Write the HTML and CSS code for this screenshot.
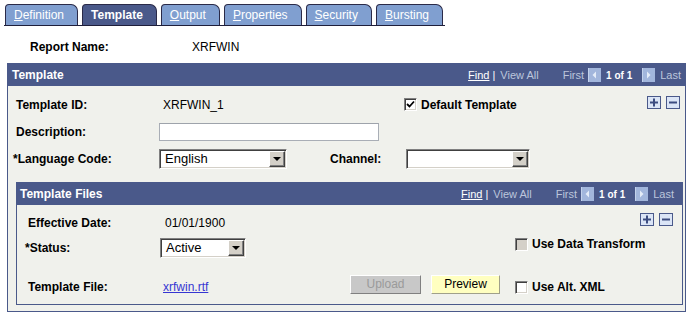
FILE: index.html
```html
<!DOCTYPE html>
<html lang="en">
<head>
    <meta charset="UTF-8">
    <title>Report Definition - Template</title>
    <link rel="stylesheet" href="styles.css">
</head>
<body>

    <!-- Page tabs -->
    <div class="tabs">
        <div class="tab"><u>D</u>efinition</div>
        <div class="tab active">Template</div>
        <div class="tab"><u>O</u>utput</div>
        <div class="tab"><u>P</u>roperties</div>
        <div class="tab"><u>S</u>ecurity</div>
        <div class="tab"><u>B</u>ursting</div>
    </div>

    <div class="report-row">
        <span class="label">Report Name:</span>
        <span>XRFWIN</span>
    </div>

    <!-- Template scroll area -->
    <div class="group outer">
        <div class="group-head">
            <span class="group-title">Template</span>
            <div class="nav">
                <a class="find">Find</a><span class="sep">|</span><span class="dim">View All</span>
                <span class="dim first">First</span>
                <svg class="nav-icon" width="13" height="14" viewBox="0 0 13 14"><rect width="13" height="14" fill="#a2b6dc"/><rect width="1" height="14" fill="#c3d2ec"/><path d="M8 3.5 L4.5 7 L8 10.5 Z" fill="#e4ecf8"/></svg>
                <b class="count">1 of 1</b>
                <svg class="nav-icon" width="13" height="14" viewBox="0 0 13 14"><rect width="13" height="14" fill="#a2b6dc"/><rect width="1" height="14" fill="#c3d2ec"/><path d="M5 3.5 L8.5 7 L5 10.5 Z" fill="#e4ecf8"/></svg>
                <span class="dim last">Last</span>
            </div>
        </div>
        <div class="group-body">
            <div class="row">
                <span class="label">Template ID:</span>
                <span class="value id-value">XRFWIN_1</span>
                <span class="check-wrap">
                    <span class="check"><svg width="9" height="9" viewBox="0 0 9 9"><path d="M1 4 L3.5 6.5 L8 1.5" stroke="#000" stroke-width="1.8" fill="none"/></svg></span>
                    <b>Default Template</b>
                </span>
                <span class="row-buttons top">
                    <span class="pm"><svg width="12" height="11" viewBox="0 0 12 11"><path d="M2 5.5 H10 M6 1.5 V9.5" stroke="#3c4c80" stroke-width="2"/></svg></span>
                    <span class="pm"><svg width="12" height="11" viewBox="0 0 12 11"><path d="M2 5.5 H10" stroke="#3c4c80" stroke-width="2"/></svg></span>
                </span>
            </div>
            <div class="row">
                <span class="label">Description:</span>
                <span class="text-input"></span>
            </div>
            <div class="row">
                <span class="label req">*Language Code:</span>
                <span class="select lang"><span class="select-text">English</span><span class="drop"></span></span>
                <span class="label channel-label">Channel:</span>
                <span class="select channel"><span class="select-text"></span><span class="drop"></span></span>
            </div>

            <!-- Template Files scroll area -->
            <div class="group inner">
                <div class="group-head">
                    <span class="group-title">Template Files</span>
                    <div class="nav">
                        <a class="find">Find</a><span class="sep">|</span><span class="dim">View All</span>
                        <span class="dim first">First</span>
                        <svg class="nav-icon" width="13" height="14" viewBox="0 0 13 14"><rect width="13" height="14" fill="#a2b6dc"/><rect width="1" height="14" fill="#c3d2ec"/><path d="M8 3.5 L4.5 7 L8 10.5 Z" fill="#e4ecf8"/></svg>
                        <b class="count">1 of 1</b>
                        <svg class="nav-icon" width="13" height="14" viewBox="0 0 13 14"><rect width="13" height="14" fill="#a2b6dc"/><rect width="1" height="14" fill="#c3d2ec"/><path d="M5 3.5 L8.5 7 L5 10.5 Z" fill="#e4ecf8"/></svg>
                        <span class="dim last">Last</span>
                    </div>
                </div>
                <div class="group-body">
                    <div class="row small-row">
                        <span class="label">Effective Date:</span>
                        <span class="value date-value">01/01/1900</span>
                        <span class="row-buttons">
                            <span class="pm"><svg width="12" height="11" viewBox="0 0 12 11"><path d="M2 5.5 H10 M6 1.5 V9.5" stroke="#3c4c80" stroke-width="2"/></svg></span>
                            <span class="pm"><svg width="12" height="11" viewBox="0 0 12 11"><path d="M2 5.5 H10" stroke="#3c4c80" stroke-width="2"/></svg></span>
                        </span>
                    </div>
                    <div class="row small-row status-row">
                        <span class="label req">*Status:</span>
                        <span class="select status"><span class="select-text">Active</span><span class="drop"></span></span>
                        <span class="check-wrap transform">
                            <span class="check disabled"></span>
                            <b>Use Data Transform</b>
                        </span>
                    </div>
                    <div class="row file-row">
                        <span class="label">Template File:</span>
                        <span class="value file-value"><a class="file-link">xrfwin.rtf</a></span>
                        <span class="btn upload">Upload</span>
                        <span class="btn preview">Preview</span>
                        <span class="check-wrap">
                            <span class="check"></span>
                            <b>Use Alt. XML</b>
                        </span>
                    </div>
                </div>
            </div>
        </div>
    </div>

</body>
</html>
```

FILE: styles.css
```css
body {
    margin: 0;
    font-family: "Liberation Sans", Arial, sans-serif;
    font-size: 12px;
    color: #000;
    background: #fff;
}

/* Tabs */
.tabs {
    display: flex;
    gap: 4px;
    width: 440px;
    margin: 4px 0 0 4px;
    padding-left: 1px;
    border-bottom: 1px solid #1e1e3a;
}
.tab {
    height: 20px;
    line-height: 21px;
    padding: 0 13px 0 8px;
    background: #809fd0;
    color: #fff;
    border: 1px solid #2a2a48;
    border-bottom: none;
    border-radius: 4px 7px 0 0;
}
.tab.active {
    background: #4a598a;
    font-weight: bold;
}

.report-row {
    display: flex;
    height: 16px;
    line-height: 16px;
    margin-top: 13px;
    padding-left: 30px;
}
.report-row .label {
    width: 162px;
}

.label {
    font-weight: bold;
    flex-shrink: 0;
}
.req {
    text-indent: -3px;
}

/* Group boxes */
.group {
    border: 1px solid #4a598a;
    background: #f0f1ec;
    box-sizing: border-box;
}
.outer {
    width: 679px;
    margin: 8px 0 0 7px;
}
.inner {
    width: 667px;
    margin-top: 10px;
}
.group-head {
    display: flex;
    align-items: center;
    justify-content: space-between;
    height: 22px;
    padding: 0 4px 0 4px;
    background: #4a598a;
    color: #fff;
}
.inner .group-head {
    padding: 0 8px 0 3px;
}
.group-title {
    font-weight: bold;
}
.nav {
    display: flex;
    align-items: center;
    font-size: 11px;
}
.find {
    color: #fff;
    text-decoration: underline;
}
.sep {
    margin: 0 5px 0 3px;
}
.dim {
    color: #bcc6dc;
}
.first {
    margin-left: 24px;
}
.nav-icon {
    margin-left: 4px;
}
.count {
    font-size: 10px;
    margin: 1px 6px 0 5px;
}
.last {
    margin-left: 5px;
}

.outer > .group-body {
    padding: 5px 5px 6px 8px;
}
.inner > .group-body {
    padding: 8px 9px 5px 11px;
}

.row {
    display: flex;
    align-items: center;
    height: 27px;
}
.outer .label {
    width: 143px;
}
.id-value {
    width: 245px;
    padding-left: 4px;
    box-sizing: border-box;
}
.inner .label {
    width: 132px;
}
.small-row {
    height: 20px;
}
.status-row {
    margin-top: 5px;
}
.file-row {
    height: 24px;
    margin-top: 17px;
}
.date-value {
    padding-left: 5px;
}
.file-value {
    width: 190px;
    padding-left: 3px;
    box-sizing: border-box;
}
.file-link {
    color: #3636d2;
    text-decoration: underline;
}

/* +/- row buttons */
.row-buttons {
    display: flex;
    gap: 5px;
    margin-left: auto;
    align-self: flex-start;
}
.row-buttons.top {
    margin-top: 5px;
}
.pm {
    display: flex;
    align-items: center;
    justify-content: center;
    width: 14px;
    height: 13px;
    box-sizing: border-box;
    border: 1px solid #4a598a;
    background: #dbe5f6;
}

/* Checkboxes */
.check-wrap {
    display: flex;
    align-items: center;
    gap: 4px;
}
.check {
    display: flex;
    align-items: center;
    justify-content: center;
    width: 13px;
    height: 13px;
    box-sizing: border-box;
    background: #fff;
    border: 1px solid;
    border-color: #808080 #fff #fff #808080;
    box-shadow: inset 1px 1px #404040, inset -1px -1px #d4d0c8;
}
.check.disabled {
    background: #d4d0c8;
}
.transform {
    margin-left: 269px;
    align-self: flex-start;
    margin-top: -1px;
}

/* Inputs */
.text-input {
    width: 220px;
    height: 18px;
    box-sizing: border-box;
    background: #fff;
    border: 1px solid #a9aeb6;
    border-top-color: #9ea3ab;
}
.select {
    display: flex;
    height: 20px;
    box-sizing: border-box;
    background: #fff;
    border: 1px solid;
    border-color: #808080 #fff #fff #808080;
    box-shadow: inset 1px 1px #404040, inset -1px -1px #d4d0c8;
    flex-shrink: 0;
}
.select-text {
    flex: 1;
    padding: 1px 0 0 5px;
    line-height: 16px;
    font-size: 13px;
}
.drop {
    position: relative;
    width: 16px;
    height: 16px;
    margin: 1px 1px 0 0;
    box-sizing: border-box;
    background: #d4d0c8;
    border: 1px solid;
    border-color: #fff #404040 #404040 #fff;
    box-shadow: inset -1px -1px #808080;
}
.drop::after {
    content: "";
    position: absolute;
    left: 3px;
    top: 5px;
    border-left: 4px solid transparent;
    border-right: 4px solid transparent;
    border-top: 4px solid #000;
}
.lang {
    width: 128px;
}
.channel-label {
    margin-left: 43px;
}
.outer .channel-label {
    width: 76px;
}
.channel {
    width: 124px;
}
.status {
    width: 86px;
}

/* Buttons */
.btn {
    align-self: flex-start;
    height: 19px;
    line-height: 17px;
    box-sizing: border-box;
    text-align: center;
    border: 1px solid;
    border-color: #fff #808080 #808080 #fff;
}
.upload {
    width: 71px;
    background: #c8c8c8;
    color: #9a9a9a;
}
.preview {
    width: 69px;
    margin: 0 15px 0 10px;
    background: #ffffc0;
    border-color: #fff #a0a08a #a0a08a #fff;
}
```
